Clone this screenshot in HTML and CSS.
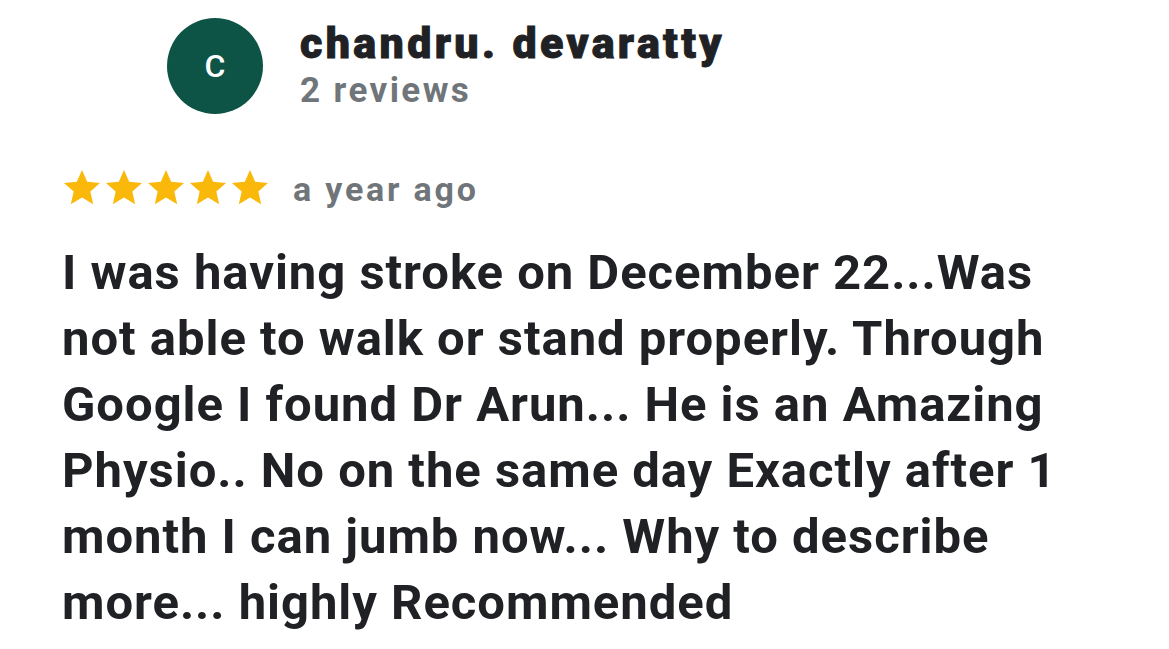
FILE: index.html
```html
<!DOCTYPE html>
<html>
<head>
<meta charset="utf-8">
<link rel="stylesheet" href="styles.css">
</head>
<body>
<div class="review">
  <div class="author">
    <div class="avatar">C</div>
    <div class="meta">
      <div class="name">chandru. devaratty</div>
      <div class="count">2 reviews</div>
    </div>
  </div>
  <div class="rating">
    <div class="stars">
      <svg class="star" viewBox="0 0 24 24"><path d="M12 1.8l3.1 7.1 7.7.7-5.8 5.1 1.7 7.6L12 18.3l-6.7 4 1.7-7.6-5.8-5.1 7.7-.7z"/></svg>
      <svg class="star" viewBox="0 0 24 24"><path d="M12 1.8l3.1 7.1 7.7.7-5.8 5.1 1.7 7.6L12 18.3l-6.7 4 1.7-7.6-5.8-5.1 7.7-.7z"/></svg>
      <svg class="star" viewBox="0 0 24 24"><path d="M12 1.8l3.1 7.1 7.7.7-5.8 5.1 1.7 7.6L12 18.3l-6.7 4 1.7-7.6-5.8-5.1 7.7-.7z"/></svg>
      <svg class="star" viewBox="0 0 24 24"><path d="M12 1.8l3.1 7.1 7.7.7-5.8 5.1 1.7 7.6L12 18.3l-6.7 4 1.7-7.6-5.8-5.1 7.7-.7z"/></svg>
      <svg class="star" viewBox="0 0 24 24"><path d="M12 1.8l3.1 7.1 7.7.7-5.8 5.1 1.7 7.6L12 18.3l-6.7 4 1.7-7.6-5.8-5.1 7.7-.7z"/></svg>
    </div>
    <div class="time">a year ago</div>
  </div>
  <p class="text">I was having stroke on December 22...Was not able to walk or stand properly. Through Google I found Dr Arun... He is an Amazing Physio.. No on the same day Exactly after 1 month I can jumb now... Why to describe more... highly Recommended</p>
</div>
</body>
</html>
```
FILE: styles.css
```css
html, body {
  margin: 0;
  padding: 0;
  background: #ffffff;
}
body {
  font-family: Roboto, "Liberation Sans", sans-serif;
  width: 1169px;
  height: 649px;
  overflow: hidden;
}
.review {
  padding: 18px 0 0 62px;
}
.author {
  display: flex;
  align-items: flex-start;
  margin-left: 105px;
  gap: 37px;
}
.avatar {
  width: 96px;
  height: 96px;
  border-radius: 50%;
  background: #0d5446;
  color: #ffffff;
  display: flex;
  align-items: center;
  justify-content: center;
  font-size: 32px;
  font-weight: 500;
}
.meta {
  display: flex;
  flex-direction: column;
}
.name {
  font-size: 43px;
  font-weight: 900;
  letter-spacing: 3.35px;
  -webkit-text-stroke: 0.9px #202124;
  color: #202124;
  line-height: 48px;
  margin-top: 1px;
}
.count {
  font-size: 35px;
  font-weight: 700;
  letter-spacing: 2.4px;
  color: #70757a;
  line-height: 44px;
  margin-top: 2px;
}
.rating {
  display: flex;
  align-items: center;
  margin-top: 50px;
  gap: 23px;
}
.stars {
  display: flex;
  gap: 2px;
}
.star {
  width: 40px;
  height: 40px;
  fill: #f9b80a;
}
.time {
  font-size: 34px;
  font-weight: 700;
  letter-spacing: 2.8px;
  color: #70757a;
  line-height: 40px;
  margin-top: 5px;
}
.text {
  margin: 31px 0 0 0;
  width: 1010px;
  font-size: 49px;
  font-weight: 700;
  letter-spacing: 0.97px;
  line-height: 66px;
  color: #202124;
}
```
